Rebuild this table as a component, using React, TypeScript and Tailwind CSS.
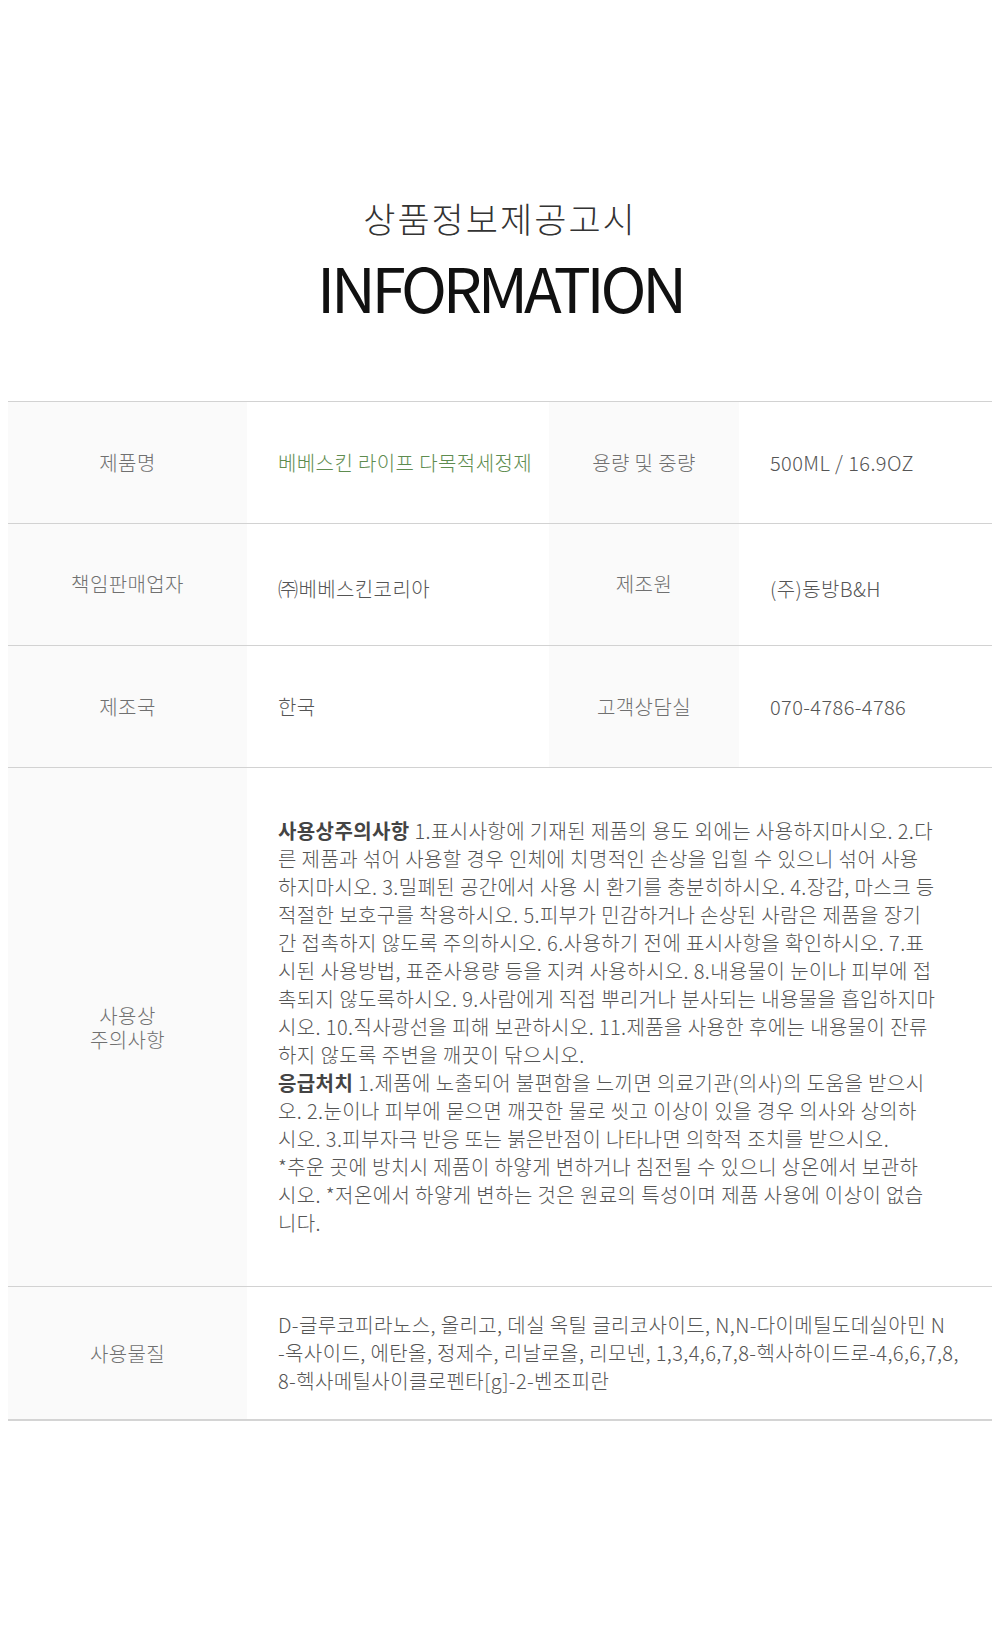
import React from 'react';

const cautionLines: { bold?: string; text: string }[] = [
  { bold: '사용상주의사항', text: ' 1.표시사항에 기재된 제품의 용도 외에는 사용하지마시오. 2.다' },
  { text: '른 제품과 섞어 사용할 경우 인체에 치명적인 손상을 입힐 수 있으니 섞어 사용' },
  { text: '하지마시오. 3.밀폐된 공간에서 사용 시 환기를 충분히하시오. 4.장갑, 마스크 등' },
  { text: '적절한 보호구를 착용하시오. 5.피부가 민감하거나 손상된 사람은 제품을 장기' },
  { text: '간 접촉하지 않도록 주의하시오. 6.사용하기 전에 표시사항을 확인하시오. 7.표' },
  { text: '시된 사용방법, 표준사용량 등을 지켜 사용하시오. 8.내용물이 눈이나 피부에 접' },
  { text: '촉되지 않도록하시오. 9.사람에게 직접 뿌리거나 분사되는 내용물을 흡입하지마' },
  { text: '시오. 10.직사광선을 피해 보관하시오. 11.제품을 사용한 후에는 내용물이 잔류' },
  { text: '하지 않도록 주변을 깨끗이 닦으시오.' },
  { bold: '응급처치', text: ' 1.제품에 노출되어 불편함을 느끼면 의료기관(의사)의 도움을 받으시' },
  { text: '오. 2.눈이나 피부에 묻으면 깨끗한 물로 씻고 이상이 있을 경우 의사와 상의하' },
  { text: '시오. 3.피부자극 반응 또는 붉은반점이 나타나면 의학적 조치를 받으시오.' },
  { text: '*추운 곳에 방치시 제품이 하얗게 변하거나 침전될 수 있으니 상온에서 보관하' },
  { text: '시오. *저온에서 하얗게 변하는 것은 원료의 특성이며 제품 사용에 이상이 없습' },
  { text: '니다.' },
];

const ingredientLines = [
  'D-글루코피라노스, 올리고, 데실 옥틸 글리코사이드, N,N-다이메틸도데실아민 N',
  '-옥사이드, 에탄올, 정제수, 리날로올, 리모넨, 1,3,4,6,7,8-헥사하이드로-4,6,6,7,8,',
  '8-헥사메틸사이클로펜타[g]-2-벤조피란',
];

function Label({ children }: { children: React.ReactNode }) {
  return (
    <div className="bg-[#fafafa] flex items-center justify-center text-center text-[20px] leading-[25px] tracking-[0.4px] text-[#707070] font-light">
      {children}
    </div>
  );
}

function Value({ children, green }: { children: React.ReactNode; green?: boolean }) {
  return (
    <div
      className={
        'flex items-center pl-[31px] text-[20px] leading-[28px] tracking-[0.4px] font-light ' +
        (green ? 'text-[#5e8c4f]' : 'text-[#555555]')
      }
    >
      {children}
    </div>
  );
}

export default function App() {
  return (
    <div className="w-full min-h-[1630px] bg-white pt-[197px] font-['Noto_Sans_CJK_KR','Noto_Sans',sans-serif]">
      <h1 className="text-center text-[35px] leading-[42px] tracking-[2px] font-light text-[#333333]">상품정보제공고시</h1>
      <h2 className="mt-[16px] text-center text-[62px] leading-none font-normal tracking-[-0.068em] text-[#111111]">
        INFORMATION
      </h2>

      <div className="mt-[84px] mx-2 border-t border-[#d2d2d2] border-b-2 border-b-[#d4d4d4]">
        <div className="grid grid-cols-[239px_302px_190px_253px] h-[122px] border-b border-[#d2d2d2]">
          <Label>제품명</Label>
          <Value green>베베스킨 라이프 다목적세정제</Value>
          <Label>용량 및 중량</Label>
          <Value>500ML / 16.9OZ</Value>
        </div>

        <div className="grid grid-cols-[239px_302px_190px_253px] h-[122px] border-b border-[#d2d2d2]">
          <Label>
            <span className="-mt-[2px]">책임판매업자</span>
          </Label>
          <Value>
            <span className="mt-[8px]">㈜베베스킨코리아</span>
          </Value>
          <Label>
            <span className="-mt-[2px]">제조원</span>
          </Label>
          <Value>
            <span className="mt-[8px]">(주)동방B&amp;H</span>
          </Value>
        </div>

        <div className="grid grid-cols-[239px_302px_190px_253px] h-[122px] border-b border-[#d2d2d2]">
          <Label>제조국</Label>
          <Value>한국</Value>
          <Label>고객상담실</Label>
          <Value>070-4786-4786</Value>
        </div>

        <div className="grid grid-cols-[239px_745px] h-[519px] border-b border-[#d2d2d2]">
          <Label>
            <span className="flex flex-col gap-[1px] leading-[23px]">
              <span>사용상</span>
              <span>주의사항</span>
            </span>
          </Label>
          <div className="flex items-center pl-[31px] text-[20px] leading-[28px] tracking-[0.4px] font-light text-[#555555] whitespace-nowrap">
            <div>
              {cautionLines.map((line, i) => (
                <div key={i}>
                  {line.bold && <b className="font-bold text-[#444444]">{line.bold}</b>}
                  {line.text}
                </div>
              ))}
            </div>
          </div>
        </div>

        <div className="grid grid-cols-[239px_745px] h-[132px]">
          <Label>사용물질</Label>
          <div className="flex items-center pl-[31px] text-[20px] leading-[28px] tracking-[0.4px] font-light text-[#555555] whitespace-nowrap">
            <div>
              {ingredientLines.map((line, i) => (
                <div key={i}>{line}</div>
              ))}
            </div>
          </div>
        </div>
      </div>
    </div>
  );
}
